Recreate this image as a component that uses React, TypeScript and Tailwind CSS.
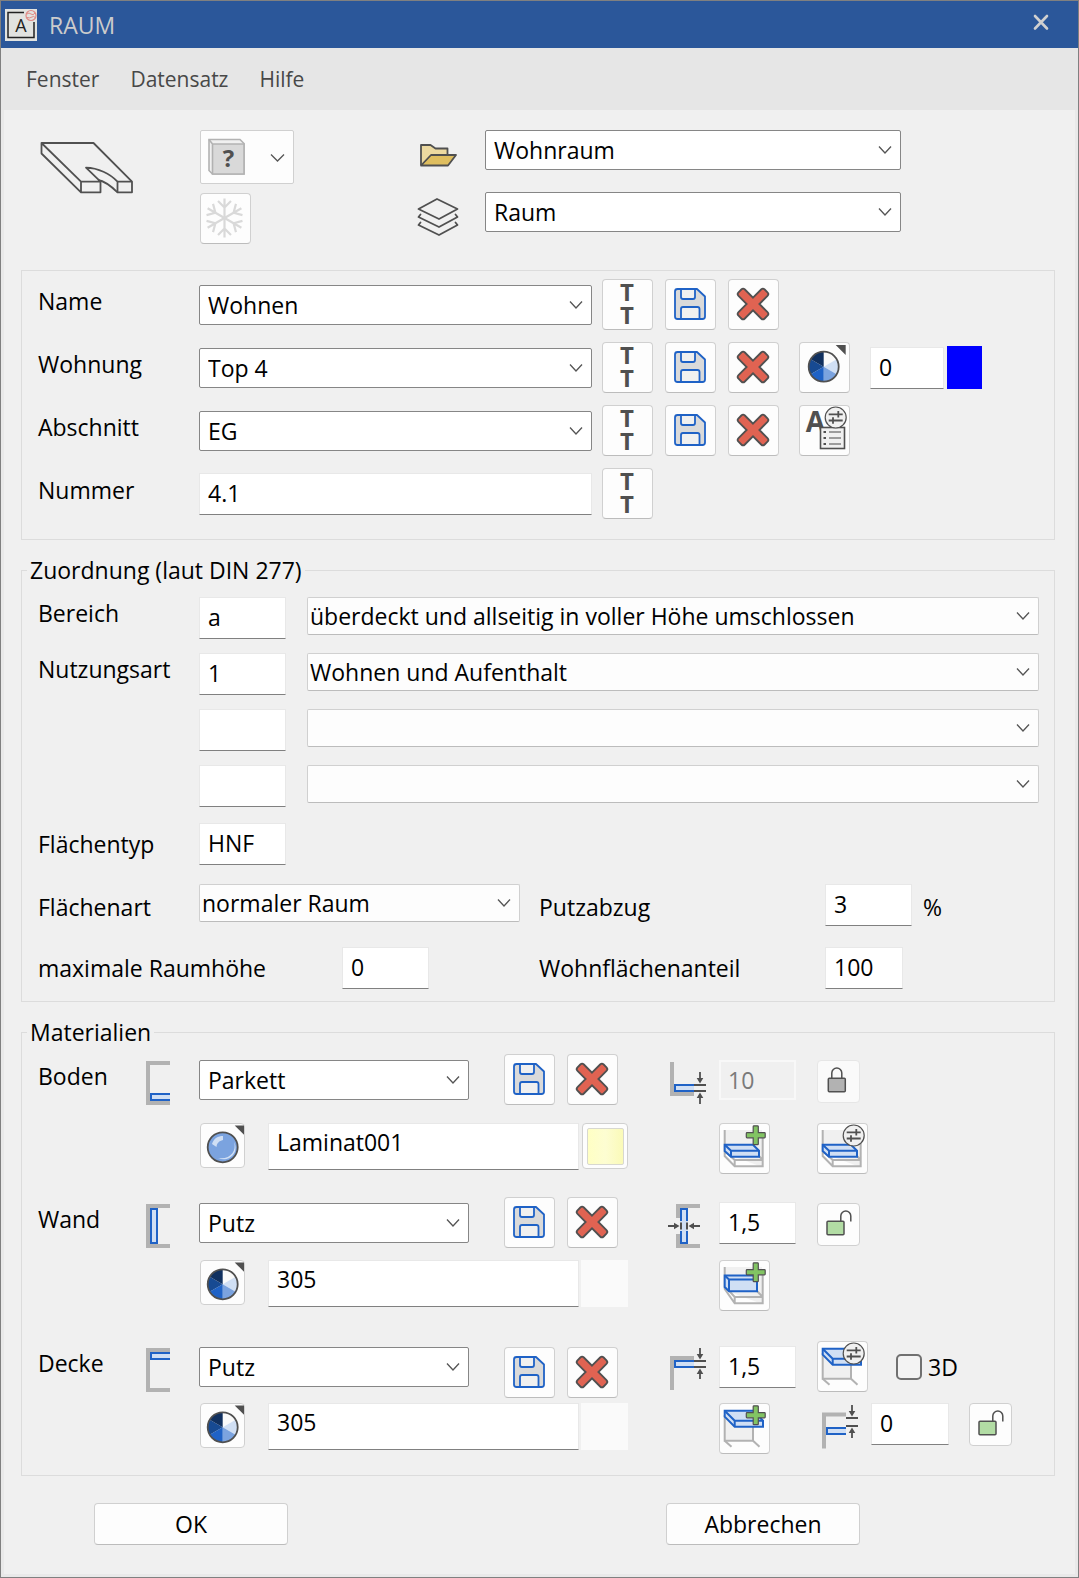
import type { ReactNode } from "react";
import clsx from "clsx";

const GREY = "#b2b2b2";
const DARK = "#505050";
const BLUE = "#1f62c6";
const LIGHT = "#d0dff4";

export default function App() {
  return (
    <div className="flex min-h-screen flex-col border border-[#808080] bg-[#e9e9e9] font-['Open_Sans','Noto_Sans',sans-serif] text-[23px] leading-8 text-black">
      <TitleBar />
      <nav className="flex h-[62px] items-center gap-[31px] bg-[#e6e6e6] px-[25px] text-[21px] text-[#484848]">
        <button type="button">Fenster</button>
        <button type="button">Datensatz</button>
        <button type="button">Hilfe</button>
      </nav>
      <form
        className="mx-[3px] mb-[3px] flex-1 bg-[#f0f0f0] pt-5 pr-5 pb-7 pl-[17px]"
        onSubmit={(e) => e.preventDefault()}
      >
        <Header />
        <NameSection />
        <AreaSection />
        <MaterialSection />
        <div className="mt-[27px] flex px-[73px]">
          <ActionButton>OK</ActionButton>
          <div className="w-[378px]" />
          <ActionButton>Abbrechen</ActionButton>
        </div>
      </form>
    </div>
  );
}

function TitleBar() {
  return (
    <header className="flex h-[47px] items-center bg-[#2b579a] pr-[29px] pl-1">
      <svg width="32" height="32" viewBox="0 0 32 32">
        <rect width="32" height="32" fill="#e2e3e0" />
        <path d="M19 3.500H3V28.500H29V13" fill="none" stroke="#222" strokeWidth="1.500" />
        <text x="16" y="23" textAnchor="middle" fontSize="18" fill="#222">A</text>
        <circle cx="26" cy="6.500" r="5" fill="none" stroke="#e08a86" strokeWidth="1.200" />
        <path d="M22 5q2-2 4 0t4-1M22 8.500q3 1 5-.5t3 .5" fill="none" stroke="#e08a86" />
      </svg>
      <h1 className="ml-3 flex-1 text-[#cccccc]">RAUM</h1>
      <button type="button" aria-label="Schließen" className="mb-1.5">
        <svg width="16" height="18" viewBox="0 0 16 18">
          <path d="M2 3l12 12.500M14 3L2 15.500" stroke="#d0d0d0" strokeWidth="2.600" strokeLinecap="round" />
        </svg>
      </button>
    </header>
  );
}

function Header() {
  return (
    <div className="flex items-start pl-[19px]">
      <svg width="95" height="54" viewBox="40 141 95 54" className="mt-[11px] mr-[65px]">
        <g fill="none" stroke={DARK} strokeWidth="1.800" strokeLinejoin="round">
          <path d="M41.500 143H93.500L132 181.700V192.300H117.500C112 187 104 181 98 180" />
          <path d="M132 181.700H117.500V192.300M117.500 181.700C110 173.500 98 168 86 167.700L100.500 181.700V192.300H81L41.500 153.500V143L81 181.700H100.500M81 181.700V192.300" />
        </g>
      </svg>
      <div className="flex w-[94px] flex-col gap-[9px]">
        <button
          type="button"
          aria-label="Darstellung"
          className="flex h-[54px] w-full items-center rounded-[2px] border border-[#d0d0d0] bg-[#fdfdfd]"
        >
          <svg width="92" height="52" viewBox="1 1 92 52">
            <path d="M9 9.500H40L44 13.500V44H12.500L9 40.500Z" fill="#f0f0f0" stroke={GREY} strokeWidth="1.600" />
            <path d="M12.500 14H44V44H12.500ZM9 9.500L12.500 14" fill="#d9d9d9" stroke={GREY} strokeWidth="1.600" />
            <text x="28.500" y="36.500" textAnchor="middle" fontSize="24" fontWeight="700" fill={DARK}>?</text>
            <path d="M71 24.500L77.500 31L84 24.500" fill="none" stroke="#555" strokeWidth="1.300" />
          </svg>
        </button>
        <IconButton label="Einfrieren">
          <g fill="none" stroke="#d9d9d9" strokeWidth="2.200">
            {[0, 60, 120, 180, 240, 300].map((angle) => (
              <path key={angle} transform={`rotate(${angle} 24.500 25)`} d="M24.500 25V5.500M18 8L24.500 14.500L31 8" />
            ))}
          </g>
        </IconButton>
      </div>
      <div className="ml-[123px] flex flex-col gap-[30px] pt-[13px]">
        <svg width="42" height="24" viewBox="-3 -1 42 24">
          <g stroke={DARK} strokeWidth="1.800" strokeLinejoin="round">
            <path d="M1 21V1H10.500L15.500 4.500H27.500V11" fill="#ecd9a0" />
            <path d="M1 21.500L11 11H36L28 21.500Z" fill="#dfbe5f" />
          </g>
        </svg>
        <svg width="42" height="40" viewBox="0 -1 42 40">
          <g fill="none" stroke={DARK} strokeWidth="1.800" strokeLinejoin="round" strokeLinecap="round">
            <path d="M20 1L1.500 11L22 21L40.500 11Z" />
            <path d="M3.500 16.500L1.500 19L22 29L40.500 19L38.500 16.500" />
            <path d="M3.500 24.500L1.500 27L22 37L40.500 27L38.500 24.500" />
          </g>
        </svg>
      </div>
      <div className="ml-[26px] flex max-w-[416px] flex-1 flex-col gap-[22px]">
        <Combo label="Ordner" value="Wohnraum" />
        <Combo label="Layer" value="Raum" />
      </div>
    </div>
  );
}

function NameSection() {
  return (
    <fieldset className="mt-[26px] flex flex-col gap-3 border border-[#dcdcdc] pt-2 pb-5 pl-4">
      <NameRow id="name" label="Name" value="Wohnen" />
      <NameRow id="wohnung" label="Wohnung" value="Top 4">
        <div className="ml-5 flex items-center">
          <IconButton label="Farbe Wohnung">
            <Pie cx={24.7} cy={24.7} />
            <path d="M36.700 3H46.700V13Z" fill={DARK} />
          </IconButton>
          <TextBox label="Farbnummer" value="0" className="ml-5 w-[74px]" />
          <div className="ml-[3px] h-[43px] w-[35px] bg-[#0000ff]" />
        </div>
      </NameRow>
      <NameRow id="abschnitt" label="Abschnitt" value="EG">
        <div className="ml-5">
          <IconButton label="Texteinstellungen">
            <text x="16.500" y="26.500" textAnchor="middle" fontSize="28" fontWeight="700" fill={DARK}>A</text>
            <rect x="21.500" y="22.500" width="24" height="21" fill="#f0f0f0" stroke={DARK} strokeWidth="1.600" />
            <path d="M30 27H42M30 33H42M30 39H42" stroke="#808080" strokeWidth="1.600" />
            <path d="M24.500 27H27M24.500 33H27M24.500 39H27" stroke={DARK} strokeWidth="2.200" />
            <SliderBadge />
          </IconButton>
        </div>
      </NameRow>
      <div className="flex items-center">
        <FieldLabel htmlFor="nummer">Nummer</FieldLabel>
        <TextBox id="nummer" value="4.1" className="w-[393px]" />
        <div className="ml-[10px]">
          <TextButton label="Text Nummer" />
        </div>
      </div>
    </fieldset>
  );
}

function NameRow({ id, label, value, children }: { id: string; label: string; value: string; children?: ReactNode }) {
  return (
    <div className="flex items-center">
      <FieldLabel htmlFor={id}>{label}</FieldLabel>
      <Combo id={id} value={value} className="w-[393px]" />
      <div className="ml-[10px] flex gap-3">
        <TextButton label={`Text ${label}`} />
        <SaveButton />
        <DeleteButton />
      </div>
      {children}
    </div>
  );
}

const usageRows = [
  { id: "bereich", label: "Bereich", code: "a", text: "überdeckt und allseitig in voller Höhe umschlossen" },
  { id: "nutzungsart", label: "Nutzungsart", code: "1", text: "Wohnen und Aufenthalt" },
  { id: "nutzung2", label: "", code: "", text: "" },
  { id: "nutzung3", label: "", code: "", text: "" },
];

function AreaSection() {
  return (
    <Group title="Zuordnung (laut DIN 277)" className="pt-[11px] pb-3">
      <div className="flex flex-col gap-3 pr-[15px]">
        {usageRows.map((row) => (
          <div key={row.id} className="flex h-11 items-start">
            <FieldLabel htmlFor={row.id}>{row.label}</FieldLabel>
            <TextBox id={row.id} label={row.label || "Nutzungsart"} value={row.code} className="w-[87px]" />
            <PlainCombo label={`${row.label || "Nutzungsart"} Auswahl`} value={row.text} className="ml-[21px] flex-1" />
          </div>
        ))}
      </div>
      <div className="mt-[14px] flex items-center">
        <label htmlFor="flaechentyp" className="w-[161px]">Flächentyp</label>
        <TextBox id="flaechentyp" value="HNF" className="w-[87px]" />
      </div>
      <div className="mt-[19px] flex h-[47px] items-start">
        <label htmlFor="flaechenart" className="w-[161px] leading-[46px]">Flächenart</label>
        <PlainCombo id="flaechenart" value="normaler Raum" className="w-[321px]" />
        <label htmlFor="putzabzug" className="ml-[19px] w-[286px] leading-[46px]">Putzabzug</label>
        <TextBox id="putzabzug" value="3" className="w-[87px]" />
        <span className="ml-[11px] leading-[46px]">%</span>
      </div>
      <div className="mt-4 flex items-center">
        <label htmlFor="raumhoehe" className="w-[304px]">maximale Raumhöhe</label>
        <TextBox id="raumhoehe" value="0" className="w-[87px]" />
        <label htmlFor="wohnanteil" className="ml-[110px] w-[286px]">Wohnflächenanteil</label>
        <TextBox id="wohnanteil" value="100" className="w-[78px]" />
      </div>
    </Group>
  );
}

function MaterialSection() {
  return (
    <Group title="Materialien" className="pt-[6px] pb-[21px]">
      <div className="flex h-[51px] items-center">
        <MaterialHead id="boden" label="Boden" value="Parkett" shape="M24 33H5V39H24" />
        <MaterialButtons />
        <svg width="38" height="48" viewBox="0 -6 38 48" className="ml-[52px]">
          <path d="M2 0V32H24" fill="none" stroke={GREY} strokeWidth="4" />
          <Strip d="M24 23H5V29H24" />
          <Arrows from={10} top={23} bottom={29} to={42} />
        </svg>
        <input
          aria-label="Dicke Boden"
          defaultValue="10"
          disabled
          className="ml-[11px] h-10 w-[77px] border-2 border-[#f8f8f8] bg-[#f0f0f0] px-[7px] text-[#7a7a7a]"
        />
        <div className="ml-[21px] flex pt-1">
          <LockButton />
        </div>
      </div>
      <div className="mt-[18px] flex h-[51px] items-start">
        <TextureField label="Oberfläche Boden" value="Laminat001" sphere />
        <button
          type="button"
          aria-label="Textur"
          className="ml-[3px] flex size-[46px] items-center justify-center rounded-[4px] border border-[#d0d0d0] bg-[#fdfdfd]"
        >
          <span className="size-[37px] rounded-[2px] border border-[#d8d8d0] bg-linear-to-r from-[#ffffc4] via-[#fdfdd2] to-[#fafab8]" />
        </button>
        <div className="ml-[91px] flex gap-[47px]">
          <IconButton label="Boden hinzufügen">
            <FloorDrawing />
            <PlusBadge />
          </IconButton>
          <IconButton label="Boden einstellen">
            <FloorDrawing />
            <SliderBadge />
          </IconButton>
        </div>
      </div>

      <div className="mt-[23px] flex h-[51px] items-center">
        <MaterialHead id="wand" label="Wand" value="Putz" shape="M5 5H11V39H5Z" />
        <MaterialButtons />
        <svg width="38" height="51" viewBox="-2 -7 38 51" className="ml-[48px]">
          <path d="M32 2H10V14M10 30V42H32" fill="none" stroke={GREY} strokeWidth="4" />
          <path d="M12 4H20V40H12Z" fill={LIGHT} />
          <path d="M13 17V5H19V17M13 27V39H19V27" fill="none" stroke={BLUE} strokeWidth="2" />
          <path d="M13 18.500V25.500M19 18.500V25.500" stroke={DARK} strokeWidth="2" />
          <path d="M0 22H7M25 22H32" stroke={DARK} strokeWidth="1.800" />
          <path d="M6 18.700V25.300L11.500 22ZM26 18.700V25.300L20.500 22Z" fill={DARK} />
        </svg>
        <TextBox label="Dicke Wand" value="1,5" className="ml-[15px] w-[77px]" />
        <div className="ml-[21px] flex pt-1">
          <LockButton open />
        </div>
      </div>
      <div className="mt-3 flex h-[51px] items-start">
        <TextureField label="Farbe Wand" value="305" />
        <div className="ml-[2px] size-[47px] bg-[#fafafa]" />
        <div className="ml-[91px]">
          <IconButton label="Wand hinzufügen">
            <path d="M5.700 7H43V44L5.700 30Z" fill="#f0f0f0" />
            <path d="M5.700 7V29L15.700 43.300H43.700V15M5.700 26L15.700 37H43.700M38 31L43.700 37M15.700 37V43.300" fill="none" stroke={GREY} strokeWidth="2" />
            <path d="M5.700 15.500H34L38 19.500V31.300H10L5.700 27Z" fill={LIGHT} stroke={BLUE} strokeWidth="2" />
            <path d="M5.700 15.500L10 19.500V31.300M10 19.500H38" fill="none" stroke={BLUE} strokeWidth="2" />
            <PlusBadge />
          </IconButton>
        </div>
      </div>

      <div className="mt-6 flex h-[63px] items-center">
        <MaterialHead id="decke" label="Decke" value="Putz" shape="M24 5H5V11H24" />
        <div className="pt-3">
          <MaterialButtons />
        </div>
        <svg width="38" height="50" viewBox="0 -6 38 50" className="ml-[52px]">
          <path d="M24 10H2V42" fill="none" stroke={GREY} strokeWidth="4" />
          <Strip d="M24 13H5V19H24" />
          <Arrows from={0} top={13} bottom={19} to={31} />
        </svg>
        <TextBox label="Dicke Decke" value="1,5" className="ml-[11px] w-[77px]" />
        <div className="ml-[21px]">
          <IconButton label="Decke einstellen">
            <CeilingDrawing />
            <SliderBadge />
          </IconButton>
        </div>
        <label className="ml-7 flex items-center gap-[6px]">
          <input
            type="checkbox"
            className="size-[26px] appearance-none rounded-[5px] border-2 border-[#707070] bg-[#f3f3f3] checked:bg-[#2b579a]"
          />
          3D
        </label>
      </div>
      <div className="mt-[5px] flex h-[51px] items-start">
        <TextureField label="Farbe Decke" value="305" />
        <div className="ml-[2px] size-[47px] bg-[#fafafa]" />
        <div className="ml-[91px]">
          <IconButton label="Decke hinzufügen">
            <CeilingDrawing />
            <PlusBadge />
          </IconButton>
        </div>
        <svg width="38" height="46" viewBox="0 -2 38 46" className="ml-[52px]">
          <path d="M24 9.500H2V43.500" fill="none" stroke={GREY} strokeWidth="4" />
          <Strip d="M24 23H5V29H24" />
          <Arrows from={0} top={13} bottom={21} to={33} />
        </svg>
        <TextBox label="Abstand Decke" value="0" className="ml-[11px] w-[78px]" />
        <div className="ml-5 flex">
          <LockButton open />
        </div>
      </div>
    </Group>
  );
}

function MaterialHead({ id, label, value, shape }: { id: string; label: string; value: string; shape: string }) {
  return (
    <>
      <label htmlFor={id} className="w-[108px] pb-2">{label}</label>
      <svg width="24" height="51" viewBox="0 -7 24 51">
        <path d="M24 2H2V42H24" fill="none" stroke={GREY} strokeWidth="4" />
        <Strip d={shape} />
      </svg>
      <Combo id={id} value={value} className="ml-[29px] w-[270px]" />
    </>
  );
}

function MaterialButtons() {
  return (
    <div className="ml-[35px] flex gap-3">
      <SaveButton />
      <DeleteButton />
    </div>
  );
}

function TextureField({ label, value, sphere }: { label: string; value: string; sphere?: boolean }) {
  return (
    <>
      <button
        type="button"
        aria-label={`${label} wählen`}
        className="ml-[162px] size-[45px] rounded-[4px] border border-[#d0d0d0] bg-[#fdfdfd]"
      >
        <svg width="43" height="43" viewBox="1 1 43 43">
          {sphere ? (
            <>
              <circle cx="22.700" cy="24.300" r="15" fill="#7ba3df" stroke={DARK} strokeWidth="1.800" />
              <path d="M34 19C37 28 30 37 18 35C28 40 40 30 34 19Z" fill={LIGHT} />
              <path d="M12 21C14 15 18 13 23 13V17C19 18 17 20 16.500 24Z" fill={LIGHT} />
            </>
          ) : (
            <Pie cx={22.7} cy={24.3} />
          )}
          <path d="M34.700 2.500H44.700V12.500Z" fill={DARK} />
        </svg>
      </button>
      <TextBox label={label} value={value} className="ml-[23px] w-[311px]" tall />
    </>
  );
}

function Group({ title, className, children }: { title: string; className?: string; children: ReactNode }) {
  return (
    <fieldset className={clsx("mt-[14px] border border-[#dcdcdc] pl-4", className)}>
      <legend className="-ml-[11px] px-[3px]">{title}</legend>
      {children}
    </fieldset>
  );
}

function FieldLabel({ htmlFor, children }: { htmlFor: string; children?: ReactNode }) {
  return <label htmlFor={htmlFor} className="w-[161px] pb-2">{children}</label>;
}

function TextBox({ id, label, value, className, tall }: { id?: string; label?: string; value: string; className?: string; tall?: boolean }) {
  return (
    <input
      id={id}
      aria-label={label}
      defaultValue={value}
      className={clsx(
        "border border-[#e8e8e8] border-b-[#808080] bg-white px-2",
        tall ? "h-[47px] pb-[10px]" : "h-[42px] pb-[2px]",
        className,
      )}
    />
  );
}

function Chevron() {
  return (
    <svg width="14" height="9" viewBox="0 0 14 9" className="pointer-events-none absolute top-1/2 right-[9px] -translate-y-1/2">
      <path d="M1 1L7 7.500L13 1" fill="none" stroke="#555" strokeWidth="1.300" />
    </svg>
  );
}

function Combo({ id, label, value, className }: { id?: string; label?: string; value: string; className?: string }) {
  return (
    <div className={clsx("relative", className)}>
      <select
        id={id}
        aria-label={label}
        className="block h-10 w-full appearance-none rounded-[2px] border border-[#868686] bg-white px-2"
      >
        <option>{value}</option>
      </select>
      <Chevron />
    </div>
  );
}

function PlainCombo({ id, label, value, className }: { id?: string; label?: string; value: string; className?: string }) {
  return (
    <div className={clsx("relative", className)}>
      <select
        id={id}
        aria-label={label}
        className="block h-[38px] w-full appearance-none rounded-[2px] border border-[#d0d0d0] border-b-[#bcbcbc] bg-[#fdfdfd] px-[2px]"
      >
        <option>{value}</option>
      </select>
      <Chevron />
    </div>
  );
}

function ActionButton({ children }: { children: ReactNode }) {
  return (
    <button type="button" className="h-[42px] w-[194px] rounded-[4px] border border-[#d0d0d0] border-b-[#bcbcbc] bg-[#fdfdfd]">
      {children}
    </button>
  );
}

function IconButton({ label, children }: { label: string; children: ReactNode }) {
  return (
    <button
      type="button"
      aria-label={label}
      className="block size-[51px] rounded-[4px] border border-[#d0d0d0] border-b-[#bcbcbc] bg-[#fdfdfd]"
    >
      <svg width="49" height="49" viewBox="1 1 49 49" className="overflow-visible">{children}</svg>
    </button>
  );
}

function TextButton({ label }: { label: string }) {
  return (
    <IconButton label={label}>
      <g fontSize="24" fontWeight="700" fill={DARK} textAnchor="middle">
        <text x="25" y="22">T</text>
        <text x="25" y="45">T</text>
      </g>
    </IconButton>
  );
}

function SaveButton() {
  return (
    <IconButton label="Speichern">
      <g stroke={BLUE} strokeWidth="1.800" strokeLinejoin="round">
        <path d="M12.500 10H32L40 17.500V37.500Q40 40 37.500 40H12.500Q10 40 10 37.500V12.500Q10 10 12.500 10Z" fill="#dadada" />
        <path d="M16 10H30V18Q30 20 28 20H18Q16 20 16 18Z" fill="#f0f0f0" />
        <path d="M16 40V30Q16 28 18 28H32.500Q34.500 28 34.500 30V40Z" fill="#f0f0f0" />
      </g>
    </IconButton>
  );
}

function DeleteButton() {
  return (
    <IconButton label="Löschen">
      <path
        transform="translate(25 25) rotate(45)"
        d="M-4.500-4.500V-16q0-2.500 2.500-2.500h4q2.500 0 2.500 2.500V-4.500H16q2.500 0 2.500 2.500v4q0 2.500-2.500 2.500H4.500V16q0 2.500-2.500 2.500h-4q-2.500 0-2.500-2.500V4.500H-16q-2.500 0-2.500-2.500v-4q0-2.500 2.500-2.500Z"
        fill="#e06352"
        stroke={DARK}
        strokeWidth="1.800"
      />
    </IconButton>
  );
}

function LockButton({ open }: { open?: boolean }) {
  return (
    <button
      type="button"
      aria-label={open ? "Sperren" : "Entsperren"}
      className={clsx(
        "size-[43px] rounded-[4px] border",
        open ? "border-[#d0d0d0] bg-[#fdfdfd]" : "border-[#e6e6e6] bg-[#fafafa]",
      )}
    >
      <svg width="41" height="41" viewBox="1 1 41 41">
        {open ? (
          <g stroke={DARK} strokeWidth="1.500">
            <rect x="10" y="18.300" width="17" height="13.500" rx="1" fill="#b2dca4" />
            <path d="M23.800 18V13A5 5 0 0 1 33.800 13V18.500" fill="none" />
          </g>
        ) : (
          <g stroke={DARK} strokeWidth="1.500">
            <path d="M14.800 18V13A5 5 0 0 1 24.800 13V18" fill="none" />
            <rect x="11.300" y="18.300" width="17" height="13.500" rx="1" fill={GREY} />
          </g>
        )}
      </svg>
    </button>
  );
}

const slices = ["#fafafa", "#d0dff4", "#7ba3df", "#1f62c6", "#174a92", "#10305f"];

function Pie({ cx, cy }: { cx: number; cy: number }) {
  return (
    <g transform={`translate(${cx} ${cy})`}>
      {slices.map((fill, i) => (
        <path key={fill} transform={`rotate(${i * 60})`} d="M0 0V-15A15 15 0 0 1 13-7.500Z" fill={fill} />
      ))}
      <circle r="15" fill="none" stroke={DARK} strokeWidth="1.800" />
    </g>
  );
}

function PlusBadge() {
  return (
    <path
      d="M34.200 3.500Q34.200 2.800 35 2.800H38.500Q39.300 2.800 39.300 3.500V9.700H45.500Q46.200 9.700 46.200 10.500V14Q46.200 14.800 45.500 14.800H39.300V21Q39.300 21.700 38.500 21.700H35Q34.200 21.700 34.200 21V14.800H28Q27.300 14.800 27.300 14V10.500Q27.300 9.700 28 9.700H34.200Z"
      fill="#82c463"
      stroke={DARK}
      strokeWidth="1.200"
    />
  );
}

function SliderBadge() {
  return (
    <g stroke={DARK}>
      <circle cx="36.700" cy="12.500" r="10.500" fill="#f0f0f0" strokeWidth="1.200" />
      <path d="M29.700 9.300H43.700M29.700 15.500H43.700M39.300 6V12.600M34 12.200V18.800" strokeWidth="1.800" />
    </g>
  );
}

function FloorDrawing() {
  return (
    <>
      <path d="M5.700 7H43V44L5.700 30Z" fill="#f0f0f0" />
      <path d="M5.700 7V33L15.700 43.300H43.700V15M5.700 28L15.700 37H43.700M40 33L43.700 37M15.700 37V43.300" fill="none" stroke={GREY} strokeWidth="2" />
      <path d="M5.700 21.700H34L40 27.700V33.700H12L5.700 28Z" fill={LIGHT} stroke={BLUE} strokeWidth="2" />
      <path d="M5.700 21.700L12 27.700V33.700M12 27.700H40" fill="none" stroke={BLUE} strokeWidth="2" />
    </>
  );
}

function CeilingDrawing() {
  return (
    <>
      <path d="M5.700 12V37.700H34V23" fill="#f0f0f0" stroke={GREY} strokeWidth="2" />
      <path d="M5.700 37.700L12.500 43.700M34 37.700L40.500 43.700" stroke={GREY} strokeWidth="2" />
      <path d="M5.700 7.700H34.500L44 17.700V23.700H15.700L5.700 13.700Z" fill={LIGHT} stroke={BLUE} strokeWidth="2" />
      <path d="M5.700 7.700L15.700 17.700V23.700M15.700 17.700H44" fill="none" stroke={BLUE} strokeWidth="2" />
    </>
  );
}

function Strip({ d }: { d: string }) {
  return <path d={d} fill={LIGHT} stroke={BLUE} strokeWidth="2" />;
}

// Measuring mark: two level lines squeezed by arrows from above and below.
function Arrows({ from, top, bottom, to }: { from: number; top: number; bottom: number; to: number }) {
  return (
    <>
      <path d={`M24 ${top}H36M24 ${bottom}H36M30 ${from}V${top - 5}M30 ${to}V${bottom + 5}`} stroke={DARK} strokeWidth="1.800" />
      <path
        d={`M26.700 ${top - 7}H33.300L30 ${top - 1.5}ZM26.700 ${bottom + 7}H33.300L30 ${bottom + 1.5}Z`}
        fill={DARK}
      />
    </>
  );
}
